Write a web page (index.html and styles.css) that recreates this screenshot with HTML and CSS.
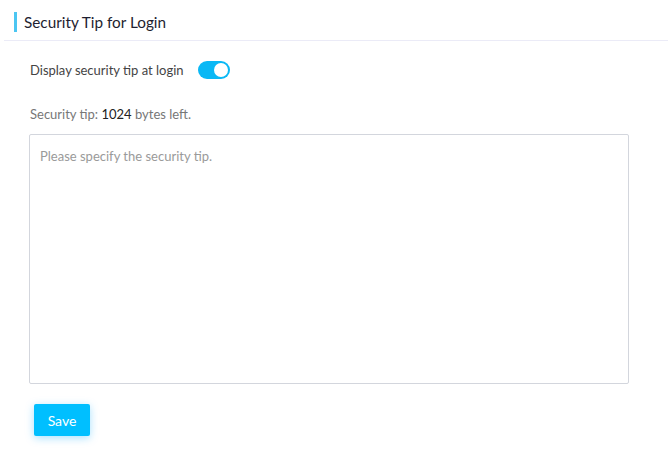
FILE: index.html
```html
<!DOCTYPE html>
<html>
<head>
<meta charset="utf-8">
<link rel="stylesheet" href="styles.css">
</head>
<body>
<div class="page">
  <div class="header">
    <span class="accent"></span>
    <h1 class="title">Security Tip for Login</h1>
  </div>
  <div class="content">
    <div class="row">
      <span class="label">Display security tip at login</span>
      <span class="toggle"><span class="knob"></span></span>
    </div>
    <div class="info">Security tip: <span class="num">1024</span> bytes left.</div>
    <textarea class="tip" placeholder="Please specify the security tip."></textarea>
    <button class="save">Save</button>
  </div>
</div>
</body>
</html>
```
FILE: styles.css
```css
* { box-sizing: border-box; }
body {
  margin: 0;
  background: #fff;
  font-family: Lato, "Noto Sans", sans-serif;
  color: #333;
}
.page { width: 668px; height: 461px; }
.header {
  margin-left: 4px;
  height: 41px;
  border-bottom: 1px solid #ebebf7;
  display: flex;
  align-items: center;
  padding-left: 10px;
  padding-top: 3px;
}
.accent {
  width: 3px;
  height: 20px;
  background: #4cc6f2;
  margin-right: 7px;
}
.title {
  margin: 0;
  font-size: 15.3px;
  font-weight: 400;
  color: #1e1e30;
}
.content {
  padding: 18px 39px 0 29px;
  display: flex;
  flex-direction: column;
}
.row {
  display: flex;
  align-items: center;
  height: 22px;
  padding-left: 1px;
}
.label { font-size: 13px; color: #444; }
.toggle {
  margin-left: 14px;
  width: 32px;
  height: 18px;
  border-radius: 9px;
  background: #0ab8f5;
  position: relative;
}
.knob {
  position: absolute;
  right: 2px;
  top: 2px;
  width: 14px;
  height: 14px;
  border-radius: 50%;
  background: #fff;
}
.info {
  margin-top: 25px;
  font-size: 13px;
  color: #777;
  padding-left: 1px;
}
.num { color: #222; }
.tip {
  margin-top: 12px;
  width: 600px;
  height: 250px;
  border: 1px solid #d3d6dd;
  border-radius: 2px;
  padding: 13px 10px;
  font-family: inherit;
  font-size: 13px;
  resize: none;
  outline: none;
}
.tip::placeholder { color: #9a9a9a; }
.save {
  margin-top: 20px;
  margin-left: 5px;
  align-self: flex-start;
  width: 56px;
  height: 32px;
  border: none;
  border-radius: 2px;
  background: #00bfff;
  color: #fff;
  font-family: inherit;
  font-size: 14px;
  box-shadow: 0 2px 8px rgba(0, 170, 255, 0.35);
}
```
